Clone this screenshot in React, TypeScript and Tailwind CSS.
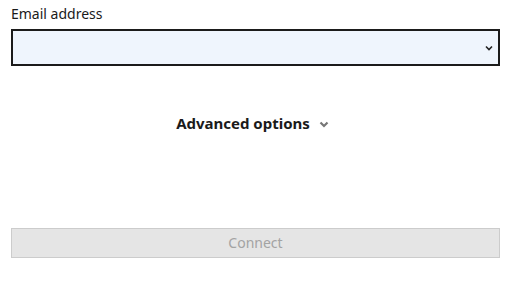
import React from "react";

export default function App() {
  return (
    <div className="w-[505px] h-[289px] bg-white pl-[11px] pr-[5px] pt-[4px]" style={{ fontFamily: '"Noto Sans", "Open Sans", sans-serif' }}>
      <label className="block text-[14px] leading-[20px] text-[#1a1a1a]">Email address</label>
      <div className="mt-[5px] h-[37px] border-2 border-[#1b1b1b] bg-[#eff5fd] flex items-center justify-end pr-[5px]">
        <svg width="8" height="6" viewBox="0 0 8 6" className="mt-[1px]">
          <path d="M1 1.5 L4 4.5 L7 1.5" stroke="#222" strokeWidth="1.6" fill="none" />
        </svg>
      </div>
      <div className="mt-[47px] pr-[6px] flex items-center justify-center">
        <span className="text-[15px] font-bold text-[#1a1a1a] leading-[20px]">Advanced options</span>
        <svg width="10" height="7" viewBox="0 0 10 7" className="ml-[9px] mt-[3px]">
          <path d="M1.5 1.5 L5 5 L8.5 1.5" stroke="#777" strokeWidth="2.2" fill="none" />
        </svg>
      </div>
      <div className="mt-[95px] h-[30px] border border-[#cccccc] bg-[#e5e5e5] flex items-center justify-center">
        <span className="text-[14px] text-[#a3a3a3] -mt-[1px]">Connect</span>
      </div>
    </div>
  );
}
